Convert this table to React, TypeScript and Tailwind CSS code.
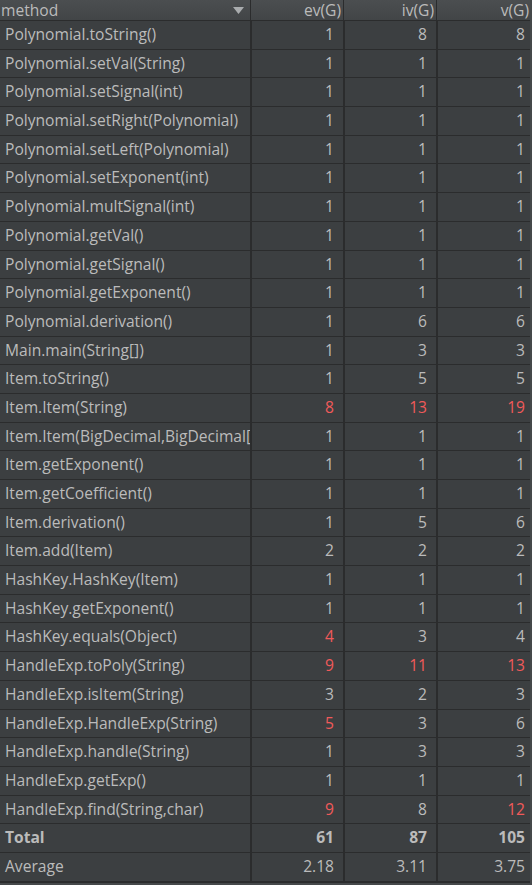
import React from 'react';

type Row = { name: string; ev: string; iv: string; v: string; red?: [boolean, boolean, boolean] };

const ROWS: Row[] = [
  { name: 'Polynomial.toString()', ev: '1', iv: '8', v: '8' },
  { name: 'Polynomial.setVal(String)', ev: '1', iv: '1', v: '1' },
  { name: 'Polynomial.setSignal(int)', ev: '1', iv: '1', v: '1' },
  { name: 'Polynomial.setRight(Polynomial)', ev: '1', iv: '1', v: '1' },
  { name: 'Polynomial.setLeft(Polynomial)', ev: '1', iv: '1', v: '1' },
  { name: 'Polynomial.setExponent(int)', ev: '1', iv: '1', v: '1' },
  { name: 'Polynomial.multSignal(int)', ev: '1', iv: '1', v: '1' },
  { name: 'Polynomial.getVal()', ev: '1', iv: '1', v: '1' },
  { name: 'Polynomial.getSignal()', ev: '1', iv: '1', v: '1' },
  { name: 'Polynomial.getExponent()', ev: '1', iv: '1', v: '1' },
  { name: 'Polynomial.derivation()', ev: '1', iv: '6', v: '6' },
  { name: 'Main.main(String[])', ev: '1', iv: '3', v: '3' },
  { name: 'Item.toString()', ev: '1', iv: '5', v: '5' },
  { name: 'Item.Item(String)', ev: '8', iv: '13', v: '19', red: [true, true, true] },
  { name: 'Item.Item(BigDecimal,BigDecimal[])', ev: '1', iv: '1', v: '1' },
  { name: 'Item.getExponent()', ev: '1', iv: '1', v: '1' },
  { name: 'Item.getCoefficient()', ev: '1', iv: '1', v: '1' },
  { name: 'Item.derivation()', ev: '1', iv: '5', v: '6' },
  { name: 'Item.add(Item)', ev: '2', iv: '2', v: '2' },
  { name: 'HashKey.HashKey(Item)', ev: '1', iv: '1', v: '1' },
  { name: 'HashKey.getExponent()', ev: '1', iv: '1', v: '1' },
  { name: 'HashKey.equals(Object)', ev: '4', iv: '3', v: '4', red: [true, false, false] },
  { name: 'HandleExp.toPoly(String)', ev: '9', iv: '11', v: '13', red: [true, true, true] },
  { name: 'HandleExp.isItem(String)', ev: '3', iv: '2', v: '3' },
  { name: 'HandleExp.HandleExp(String)', ev: '5', iv: '3', v: '6', red: [true, false, false] },
  { name: 'HandleExp.handle(String)', ev: '1', iv: '3', v: '3' },
  { name: 'HandleExp.getExp()', ev: '1', iv: '1', v: '1' },
  { name: 'HandleExp.find(String,char)', ev: '9', iv: '8', v: '12', red: [true, false, true] },
];

const GRID = 'grid grid-cols-[250px_93px_93px_94px]';

const Num = ({ value, red, bold, last }: { value: string; red?: boolean; bold?: boolean; last?: boolean }) => (
  <div
    className={`flex items-center justify-end border-l-2 border-[#2b2c2d] ${last ? 'pr-[5px]' : 'pr-[9px]'} ${
      red ? 'text-[#f05a5a]' : 'text-[#bbbbbb]'
    } ${bold ? 'font-bold' : ''}`}
  >
    {value}
  </div>
);

const BodyRow = ({ row, bold }: { row: Row; bold?: boolean }) => (
  <div className={`${GRID} h-[28.7px] border-t border-[#2b2c2d]`}>
    <div className={`flex items-center overflow-hidden whitespace-nowrap pl-[5px] text-[#bbbbbb] ${bold ? 'font-bold' : ''}`}>
      {row.name}
    </div>
    <Num value={row.ev} red={row.red?.[0]} bold={bold} />
    <Num value={row.iv} red={row.red?.[1]} bold={bold} />
    <Num value={row.v} red={row.red?.[2]} bold={bold} last />
  </div>
);

export default function App() {
  return (
    <div className="h-[885px] w-[532px] overflow-hidden bg-[#45484a] text-[15.6px] leading-none" style={{ fontFamily: '"Open Sans", "Noto Sans", sans-serif' }}>
      <div className="w-[530px] bg-[#3c3f41] border-b-2 border-[#2b2c2d]">
        {/* header */}
        <div className={`${GRID} h-[20px] leading-[20px] bg-gradient-to-b from-[#4b4e50] to-[#424547] text-[#bbbbbb]`}>
          <div className="flex items-center justify-between pl-[1px] pr-[6px]">
            <span>method</span>
            <svg width="11" height="7" viewBox="0 0 11 7">
              <path d="M0 0 L11 0 L5.5 7 Z" fill="#a9acae" />
            </svg>
          </div>
          <div className="flex items-center justify-end border-l border-[#2b2c2d] pr-[2px]">ev(G)</div>
          <div className="flex items-center justify-end border-l border-[#2b2c2d] pr-[2px]">iv(G)</div>
          <div className="flex items-center justify-end border-l border-[#2b2c2d] pr-[1px]">v(G)</div>
        </div>
        {ROWS.map((r) => (
          <BodyRow key={r.name} row={r} />
        ))}
        <BodyRow row={{ name: 'Total', ev: '61', iv: '87', v: '105' }} bold />
        <BodyRow row={{ name: 'Average', ev: '2.18', iv: '3.11', v: '3.75' }} />
      </div>
    </div>
  );
}
